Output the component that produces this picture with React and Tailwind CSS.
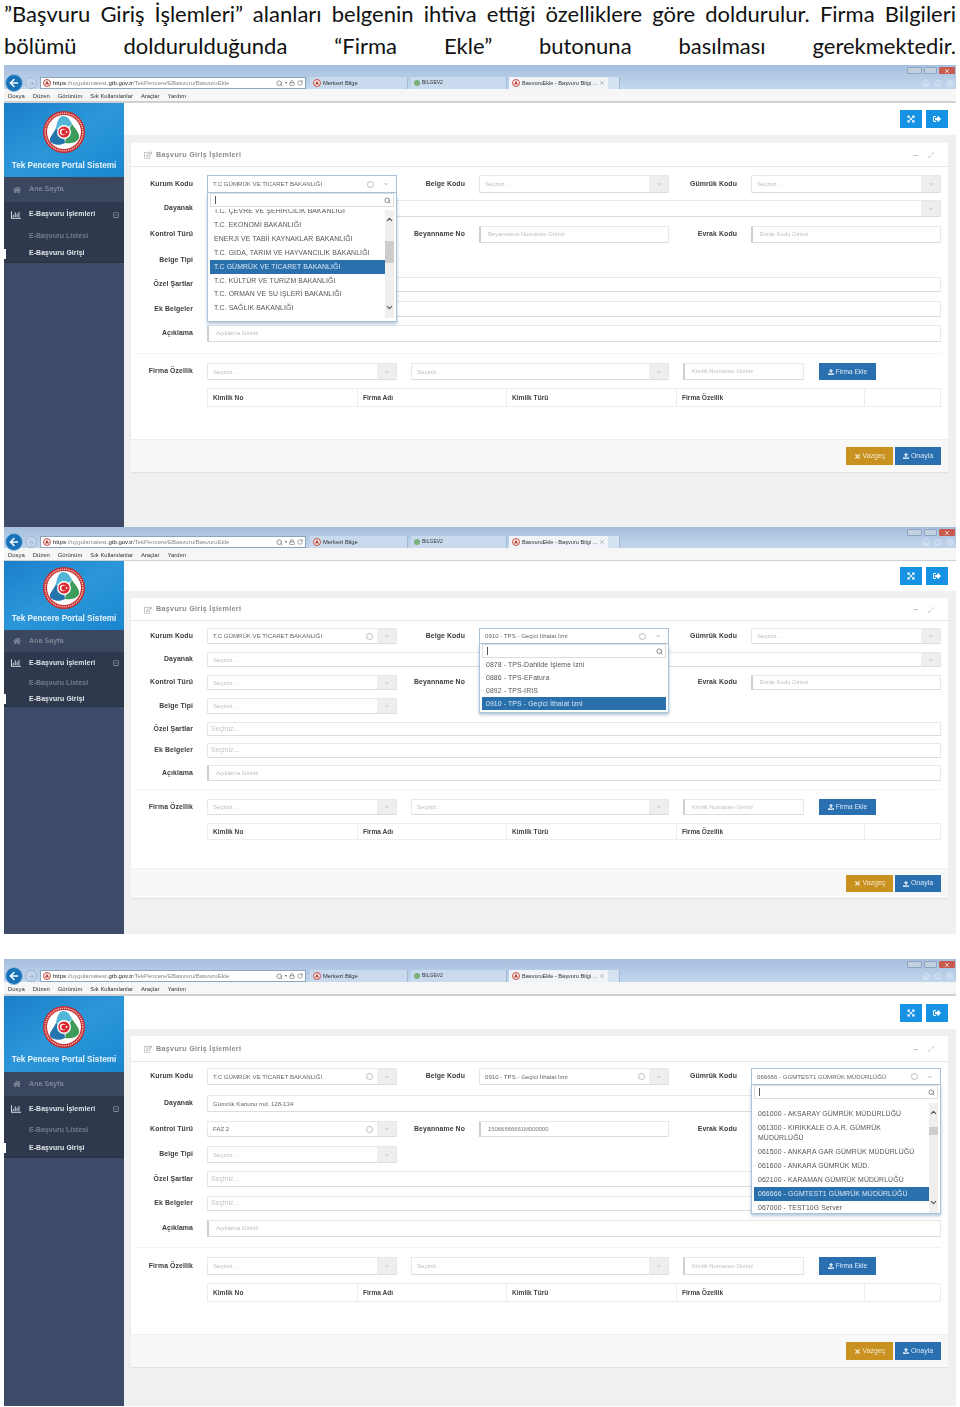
import { ArrowLeft, ArrowRight, ChevronDown, ChevronUp, Lock, RotateCw, Search, Home, Star, Settings, X } from 'lucide-react';
import { FaHome, FaRegChartBar, FaRegEdit, FaRegMinusSquare, FaExpandArrowsAlt, FaSignOutAlt, FaTimes, FaUpload, FaMinus, FaExpandAlt } from 'react-icons/fa';

const FONT = "font-['Liberation_Sans',Arial,sans-serif]";

const MENU = ['Dosya', 'Düzen', 'Görünüm', 'Sık Kullanılanlar', 'Araçlar', 'Yardım'];
const COLS = [
    { name: 'Kimlik No', cls: 'w-[150px]' },
    { name: 'Firma Adı', cls: 'w-[149px]' },
    { name: 'Kimlik Türü', cls: 'w-[170px]' },
    { name: 'Firma Özellik', cls: 'w-[188px]' },
    { name: '', cls: 'flex-1' },
];

const KURUM_ITEMS = [
    'T.C. EKONOMİ BAKANLIĞI',
    'ENERJİ VE TABİİ KAYNAKLAR BAKANLIĞI',
    'T.C. GIDA, TARIM VE HAYVANCILIK BAKANLIĞI',
    'T.C GÜMRÜK VE TİCARET BAKANLIĞI',
    'T.C. KÜLTÜR VE TURİZM BAKANLIĞI',
    'T.C. ORMAN VE SU İŞLERİ BAKANLIĞI',
    'T.C. SAĞLIK BAKANLIĞI',
];
const BELGE_ITEMS = ['0878 - TPS-Dahilde İşleme İzni', '0886 - TPS-EFatura', '0892 - TPS-IRIS', '0910 - TPS - Geçici İthalat İzni'];
const GUMRUK_ITEMS = [
    '061000 - AKSARAY GÜMRÜK MÜDÜRLÜĞÜ',
    '061300 - KIRIKKALE O.A.R. GÜMRÜK MÜDÜRLÜĞÜ',
    '061500 - ANKARA GAR GÜMRÜK MÜDÜRLÜĞÜ',
    '061600 - ANKARA GÜMRÜK MÜD.',
    '062100 - KARAMAN GÜMRÜK MÜDÜRLÜĞÜ',
    '066666 - GGMTEST1 GÜMRÜK MÜDÜRLÜĞÜ',
    '067000 - TEST10G Server',
];

const Favicon = () => (
    <svg viewBox="0 0 10 10" className="w-[8px] h-[8px] shrink-0">
        <circle cx="5" cy="5" r="4.3" fill="#fff" stroke="#c0392b" strokeWidth="1.2" />
        <path d="M5 2 L7.6 7 H2.4 Z" fill="#b4483f" />
    </svg>
);

const Logo = () => (
    <svg viewBox="0 0 42 42" className="w-[42px] h-[42px]">
        <circle cx="21" cy="21" r="21" fill="#c62f32" />
        <circle cx="21" cy="21" r="18.8" fill="none" stroke="#f3c9c4" strokeWidth="1.4" strokeDasharray="1.2 1" />
        <circle cx="21" cy="21" r="17" fill="#fff" />
        <path d="M20 5 C25 5 27 9 29 13 L21 21 L13 17 C14 11 16 5 20 5 Z" fill="#53b6d6" />
        <path d="M29 13 C32 18 37 22 36 27 C34 32 26 33 22 32 L24 22 Z" fill="#3d9a58" />
        <path d="M13 17 L21 24 L22 32 C17 35 9 34 7 30 C6 26 11 22 13 17 Z" fill="#2474ad" />
        <circle cx="21" cy="21" r="7" fill="#fff" />
        <circle cx="21" cy="21" r="5.6" fill="#d8262c" />
        <circle cx="20" cy="21" r="3.2" fill="#fff" />
        <circle cx="21" cy="21" r="2.6" fill="#d8262c" />
        <circle cx="23.6" cy="21" r="0.9" fill="#fff" />
    </svg>
);

const Chrome = ({ cfg }) => (
    <div className={`${cfg.chrome} flex flex-col bg-gradient-to-b from-[#a6bfdf] via-[#bdd2ea] to-[#cfdff1] overflow-visible`}>
        <div className="h-[13px] flex items-start justify-end pt-[2px] pr-[1px] gap-[2px]">
            <div className="w-[15px] h-[7px] border border-[#8ea5bf] bg-[#c2d0e0] rounded-[1px]" />
            <div className="w-[13px] h-[7px] border border-[#8ea5bf] bg-[#c2d0e0] rounded-[1px]" />
            <div className="w-[16px] h-[7px] bg-[#c95a50] rounded-[1px] flex items-center justify-center">
                <X size={6} strokeWidth={3} className="text-white" />
            </div>
        </div>
        <div className="h-[12px] flex items-center">
            <div className="ml-[1px] w-[18px] h-[18px] -my-[3px] z-10 rounded-full bg-[#1872b8] border border-[#8fbbdf] flex items-center justify-center">
                <ArrowLeft size={12} strokeWidth={3} className="text-white" />
            </div>
            <div className="ml-[2px] w-[12px] h-[12px] rounded-full bg-[#c6d6ea] border border-[#9fb7d3] flex items-center justify-center">
                <ArrowRight size={7} className="text-[#8fa8c6]" />
            </div>
            <div className="ml-[3px] w-[266px] h-[12px] bg-white border border-[#8ea5bf] flex items-center pl-[2px] pr-[2px] gap-[2px]">
                <Favicon />
                <span className="text-[6px] text-[#888] whitespace-nowrap">
                    <span className="text-[#222]">https</span>://uygulamatest.<span className="text-[#222]">gtb.gov.tr</span>/TekPencere/EBasvuru/BasvuruEkle
                </span>
                <div className="ml-auto flex items-center gap-[2px] text-[#555]">
                    <Search size={7} />
                    <span className="text-[4px]">▾</span>
                    <Lock size={6} />
                    <RotateCw size={6} />
                </div>
            </div>
            <div className="ml-[4px] w-[98px] h-[12px] bg-[#c9daee] border-r border-[#a4bad6] flex items-center pl-[3px] gap-[2px]">
                <Favicon />
                <span className="text-[5.8px] text-[#333]">Merkezi Bilge</span>
            </div>
            <div className="ml-[3px] w-[96px] h-[12px] bg-[#c9daee] border-r border-[#a4bad6] flex items-center pl-[3px] gap-[2px]">
                <div className="w-[6px] h-[6px] rounded-full bg-[#7bb079]" />
                <span className="text-[5px] text-[#333]">BILGEV2</span>
            </div>
            <div className="ml-[2px] w-[99px] h-[12px] bg-[#f0f4f9] flex items-center pl-[3px] gap-[2px]">
                <Favicon />
                <span className="text-[5.6px] text-[#333] whitespace-nowrap">BasvuruEkle - Başvuru Bilgi ...</span>
                <X size={6} className="ml-auto mr-[3px] text-[#777]" />
            </div>
            <div className="w-[12px] h-[12px] bg-[#d5e2f2] border-r border-[#a4bad6]" />
            <div className="ml-auto mr-[2px] flex items-center gap-[4px] text-[#e8eff7]">
                <Home size={8} />
                <Star size={8} />
                <Settings size={8} />
            </div>
        </div>
        <div className="flex-1 bg-[#f6f6f6] border-b-2 border-[#d0d0d0] flex items-center pt-[3px] pl-[4px] gap-[8px] text-[5.9px] text-[#333]">
            {MENU.map(item => <span key={item}>{item}</span>)}
        </div>
    </div>
);

const Sidebar = ({ cfg }) => (
    <div className="w-[120px] shrink-0 bg-[#3e4b68] flex flex-col">
        <div className={`${cfg.brand} bg-gradient-to-br from-[#1a7fca] via-[#2b97d9] to-[#1a86cf] flex flex-col items-center`}>
            <Logo />
            <span className="mt-auto text-[8.2px] font-bold text-[#e9f3fa] whitespace-nowrap">Tek Pencere Portal Sistemi</span>
        </div>
        <div className={`${cfg.ana} bg-[#3b465f] flex items-center pl-[9px] gap-[8px] text-[#7f8795]`}>
            <FaHome size={8} />
            <span className="text-[7px] font-bold tracking-[0.1px]">Ana Sayfa</span>
        </div>
        <div className="bg-[#2e394e] flex flex-col border-b border-[#26303f]">
            <div className={`${cfg.groupTitle} flex items-center pl-[7px] pr-[5px] text-[#dfe3e8]`}>
                <FaRegChartBar size={10} />
                <span className="ml-[8px] text-[6.9px] font-bold tracking-[0.1px]">E-Başvuru İşlemleri</span>
                <FaRegMinusSquare size={6} className="ml-auto text-[#a0a7b2]" />
            </div>
            <div className={`${cfg.groupItem1} flex items-center pl-[25px] text-[7px] font-bold text-[#737c8b]`}>E-Başvuru Listesi</div>
            <div className={`${cfg.groupItem2} flex items-center text-[6.9px] font-bold text-[#e4e7eb] tracking-[0.1px]`}>
                <div className="w-[2px] h-[10px] bg-white mr-[23px]" />
                E-Başvuru Girişi
            </div>
        </div>
    </div>
);

const Label = ({ text, className }) => (
    <div className={`${className} shrink-0 mr-[14px] text-right text-[6.9px] font-bold text-[#3b3b3b] tracking-[0.1px] whitespace-nowrap`}>{text}</div>
);

const ClearDot = () => <div className="w-[7px] h-[7px] rounded-full border border-[#bcbcbc] shrink-0" />;

const Select = ({ value, placeholder = 'Seçiniz...', clear, arrow = true, className = 'w-[190px]' }) => (
    <div className={`${className} h-full flex bg-white border border-[#e8e8e8] border-b-[#dcdcdc]`}>
        <div className={`flex-1 pl-[5px] pr-[4px] flex items-center text-[6.1px] whitespace-nowrap overflow-hidden ${value ? 'text-[#666]' : 'text-[#bdbdbd]'}`}>
            {value || placeholder}
            {clear && <div className="ml-auto"><ClearDot /></div>}
        </div>
        {arrow && (
            <div className="w-[19px] bg-[#eeeeee] flex items-center justify-center">
                <ChevronDown size={6} className="text-[#999]" />
            </div>
        )}
    </div>
);

const Input = ({ placeholder, value, className = 'w-[190px]' }) => (
    <div className={`${className} h-full bg-white border border-[#e8e8e8] border-b-[#dcdcdc] border-l-2 border-l-[#cfcfcf] pl-[7px] flex items-center text-[5.9px] whitespace-nowrap ${value ? 'text-[#777]' : 'text-[#c0c0c0]'}`}>
        {value || placeholder}
    </div>
);

const Multi = () => (
    <div className="flex-1 h-full bg-white border border-[#e8e8e8] border-b-[#dcdcdc] pl-[3px] flex items-center text-[7px] text-[#c4c4c4]">Seçiniz...</div>
);

const ScrollTrack = ({ thumb, track }) => (
    <div className={`${track} w-[9px] bg-[#efefef] flex flex-col items-center justify-between`}>
        <ChevronUp size={9} strokeWidth={3} className="text-[#555] mt-[5px] shrink-0" />
        <div className={`${thumb} w-[9px] bg-[#cdcdcd]`} />
        <ChevronDown size={9} strokeWidth={3} className="text-[#555] mb-[6px] shrink-0" />
    </div>
);

// açık select2 kutusu: başlık + arama + liste
const OpenSelect = ({ value, children, panel }) => (
    <div className="relative w-[190px] h-full z-20">
        <div className="h-full bg-white border border-[#a9c3da] flex items-center pl-[5px] pr-[7px] text-[6.1px] text-[#666] whitespace-nowrap">
            {value}
            <div className="ml-auto flex items-center gap-[9px]">
                <ClearDot />
                <ChevronDown size={6} className="text-[#777]" />
            </div>
        </div>
        <div className={`${panel} absolute left-0 top-full w-[190px] bg-white border border-[#a9c3da] border-t-0 shadow-[0_2px_3px_rgba(90,130,170,0.45)] px-[2px]`}>
            <div className="h-[14px] border border-[#dcdcdc] flex items-center pl-[4px] pr-[2px]">
                <div className="w-px h-[8px] bg-[#555]" />
                <Search size={7} strokeWidth={2.5} className="ml-auto text-[#666]" />
            </div>
            {children}
        </div>
    </div>
);

const Option = ({ text, active, cls }) => (
    <div className={`${cls} pl-[4px] flex items-center text-[6.9px] tracking-[0.1px] leading-[10px] ${active ? 'bg-[#2a70ac] text-[#dbe8f3]' : 'text-[#555]'}`}>{text}</div>
);

const KurumList = () => (
    <div className="flex h-[111px] mt-[2px] overflow-hidden">
        <div className="flex-1 overflow-hidden">
            <div className="h-[12px] -mt-[3px] pl-[4px] text-[6.9px] leading-[10px] tracking-[0.1px] text-[#555]">T.C. ÇEVRE VE ŞEHİRCİLİK BAKANLIĞI</div>
            {KURUM_ITEMS.map(item => <Option key={item} text={item} active={item.startsWith('T.C GÜMRÜK')} cls="h-[13.9px]" />)}
        </div>
        <ScrollTrack track="h-[108px] mt-[1px]" thumb="h-[22px] -mt-[24px]" />
    </div>
);

const BelgeList = () => (
    <div className="pb-[2px]">
        {BELGE_ITEMS.map(item => <Option key={item} text={item} active={item.startsWith('0910')} cls="h-[13px]" />)}
    </div>
);

const GumrukList = () => (
    <div className="flex h-[114px] pt-[4px]">
        <div className="flex-1 pt-[4px]">
            {GUMRUK_ITEMS.map(item => (
                <Option
                    key={item}
                    text={item}
                    active={item.startsWith('066666')}
                    cls={item.startsWith('061300') ? 'h-[23.5px] pr-[30px]' : 'h-[14px]'}
                />
            ))}
        </div>
        <ScrollTrack track="h-[110px]" thumb="h-[8px] -mt-[54px]" />
    </div>
);

const Panel = ({ cfg }) => {
    const { rows, data } = cfg;
    return (
        <div className="flex-1 bg-[#f0f0f0] flex flex-col">
            <div className={`${cfg.topbar} bg-white flex items-center justify-end pr-[8px] gap-[4px]`}>
                <div className="w-[22px] h-[18px] bg-[#1792e3] flex items-center justify-center text-white"><FaExpandArrowsAlt size={8} /></div>
                <div className="w-[22px] h-[18px] bg-[#1792e3] flex items-center justify-center text-white"><FaSignOutAlt size={8} /></div>
            </div>
            <div className={`${cfg.panelTop} ml-[7px] mr-[8px] bg-white flex flex-col shadow-[0_1px_1px_rgba(0,0,0,0.06)]`}>
                <div className={`${cfg.head} border-b border-[#e6e6e6] flex items-center pt-[1px] pl-[13px] pr-[14px] text-[#8b8b8b]`}>
                    <FaRegEdit size={8} className="text-[#aaa]" />
                    <span className="ml-[4px] text-[7.2px] font-bold tracking-[0.3px]">Başvuru Giriş İşlemleri</span>
                    <FaMinus size={5} className="ml-auto text-[#c4c4c4]" />
                    <FaExpandAlt size={6} className="ml-[10px] text-[#cfcfcf]" />
                </div>

                <div className="flex flex-col pr-[7px]">
                    <div className={`${rows[0]} flex items-center`}>
                        <Label text="Kurum Kodu" className="w-[62px]" />
                        {data.open === 'kurum'
                            ? <OpenSelect value="T.C GÜMRÜK VE TİCARET BAKANLIĞI" panel="h-[129px]"><KurumList /></OpenSelect>
                            : <Select value="T.C GÜMRÜK VE TİCARET BAKANLIĞI" clear />}
                        <Label text="Belge Kodu" className="w-[68px]" />
                        {data.open === 'belge'
                            ? <OpenSelect value="0910 - TPS - Geçici İthalat İzni" panel="h-[69px]"><BelgeList /></OpenSelect>
                            : <Select value={data.belge} clear={!!data.belge} />}
                        <Label text="Gümrük Kodu" className="w-[68px]" />
                        {data.open === 'gumruk'
                            ? <OpenSelect value="066666 - GGMTEST1 GÜMRÜK MÜDÜRLÜĞÜ" panel="h-[129px]"><GumrukList /></OpenSelect>
                            : <Select />}
                    </div>
                    <div className={`${rows[1]} flex items-center`}>
                        <Label text="Dayanak" className="w-[62px]" />
                        <Select value={data.dayanak} className="flex-1" />
                    </div>
                    <div className={`${rows[2]} flex items-center`}>
                        <Label text="Kontrol Türü" className="w-[62px]" />
                        <Select value={data.kontrol} clear={!!data.kontrol} />
                        <Label text="Beyanname No" className="w-[68px]" />
                        <Input placeholder="Beyanname Numarası Giriniz" value={data.beyanname} />
                        <Label text="Evrak Kodu" className="w-[68px]" />
                        <Input placeholder="Evrak Kodu Giriniz" />
                    </div>
                    <div className={`${rows[3]} flex items-center`}>
                        <Label text="Belge Tipi" className="w-[62px]" />
                        <Select />
                    </div>
                    <div className={`${rows[4]} flex items-center`}>
                        <Label text="Özel Şartlar" className="w-[62px]" />
                        <Multi />
                    </div>
                    <div className={`${rows[5]} flex items-center`}>
                        <Label text="Ek Belgeler" className="w-[62px]" />
                        <Multi />
                    </div>
                    <div className={`${rows[6]} flex items-center`}>
                        <Label text="Açıklama" className="w-[62px]" />
                        <Input placeholder="Açıklama Giriniz" className="flex-1" />
                    </div>
                    <div className={`${rows[7]} h-px ml-[7px] bg-[#f2f2f2]`} />
                    <div className={`${rows[8]} flex items-center`}>
                        <Label text="Firma Özellik" className="w-[62px]" />
                        <Select />
                        <Select className="ml-[14px] w-[258px]" />
                        <Input placeholder="Kimlik Numarası Giriniz" className="ml-[14px] w-[121px]" />
                        <div className="ml-[15px] w-[57px] h-full bg-[#2a6fb0] flex items-center justify-center gap-[2px] text-[#dbe8f5]">
                            <FaUpload size={6} />
                            <span className="text-[6.6px]">Firma Ekle</span>
                        </div>
                    </div>
                    <div className={`${rows[9]} ml-[76px] flex border border-[#ededed]`}>
                        {COLS.map((col, i) => (
                            <div key={i} className={`${col.cls} ${i < COLS.length - 1 ? 'border-r border-[#ededed]' : ''} pl-[5px] flex items-center text-[6.6px] font-bold text-[#444]`}>{col.name}</div>
                        ))}
                    </div>
                </div>

                <div className={`${cfg.foot} bg-[#f8f8f8] border-t border-[#efefef] flex items-center justify-end pr-[7px] gap-[2px]`}>
                    <div className={`${cfg.btn} w-[47px] bg-[#c9911f] flex items-center justify-center gap-[2px] text-[#f3e7cc]`}>
                        <FaTimes size={7} />
                        <span className="text-[7px]">Vazgeç</span>
                    </div>
                    <div className={`${cfg.btn} w-[46px] bg-[#2a6fb0] flex items-center justify-center gap-[2px] text-[#dbe8f5]`}>
                        <FaUpload size={6} />
                        <span className="text-[7px]">Onayla</span>
                    </div>
                </div>
            </div>
        </div>
    );
};

const Shot = ({ cfg }) => (
    <div className={`${cfg.height} mx-[4px] w-[952px] flex flex-col blur-[0.35px]`}>
        <Chrome cfg={cfg} />
        <div className="flex-1 flex">
            <Sidebar cfg={cfg} />
            <Panel cfg={cfg} />
        </div>
    </div>
);

const SHOT_1 = {
    height: 'h-[462px]', chrome: 'h-[38px]', brand: 'h-[74px] pt-[8px] pb-[5px]', ana: 'h-[25px]',
    groupTitle: 'h-[25px]', groupItem1: 'h-[18px]', groupItem2: 'h-[17px]',
    topbar: 'h-[32px]', panelTop: 'mt-[8px]', head: 'h-[24px]', foot: 'mt-[32px] h-[33px]', btn: 'h-[18px]',
    rows: ['mt-[8px] h-[18px]', 'mt-[7px] h-[17px]', 'mt-[9px] h-[17px]', 'mt-[8px] h-[18px]', 'mt-[8px] h-[15px]', 'mt-[9px] h-[16px]', 'mt-[8px] h-[17px]', 'mt-[11px]', 'mt-[9px] h-[17px]', 'mt-[8px] h-[19px]'],
    data: { open: 'kurum' },
};

const SHOT_2 = {
    height: 'h-[407px]', chrome: 'h-[34px]', brand: 'h-[69px] pt-[6px] pb-[5px]', ana: 'h-[22px]',
    groupTitle: 'h-[22px]', groupItem1: 'h-[18px]', groupItem2: 'h-[14px]',
    topbar: 'h-[30px]', panelTop: 'mt-[7px]', head: 'h-[23px]', foot: 'mt-[28px] h-[30px]', btn: 'h-[17px]',
    rows: ['mt-[7px] h-[16px]', 'mt-[8px] h-[15px]', 'mt-[8px] h-[15px]', 'mt-[8px] h-[16px]', 'mt-[8px] h-[14px]', 'mt-[7px] h-[15px]', 'mt-[7px] h-[16px]', 'mt-[8px]', 'mt-[9px] h-[16px]', 'mt-[8px] h-[17px]'],
    data: { open: 'belge' },
};

const SHOT_3 = {
    height: 'h-[447px]', chrome: 'h-[37px]', brand: 'h-[76px] pt-[10px] pb-[6px]', ana: 'h-[24px]',
    groupTitle: 'h-[26px]', groupItem1: 'h-[17px]', groupItem2: 'h-[18px]',
    topbar: 'h-[33px]', panelTop: 'mt-[7px]', head: 'h-[26px]', foot: 'mt-[32px] h-[33px]', btn: 'h-[18px]',
    rows: ['mt-[6px] h-[17px]', 'mt-[10px] h-[17px]', 'mt-[9px] h-[16px]', 'mt-[9px] h-[17px]', 'mt-[8px] h-[16px]', 'mt-[9px] h-[15px]', 'mt-[9px] h-[17px]', 'mt-[10px]', 'mt-[9px] h-[18px]', 'mt-[8px] h-[19px]'],
    data: { open: 'gumruk', belge: '0910 - TPS - Geçici İthalat İzni', dayanak: 'Gümrük Kanunu md. 128-134', kontrol: 'FAZ 2', beyanname: '15066666661M000000' },
};

export default function App() {
    return (
        <div className={`${FONT} w-[960px] h-[1407px] bg-white overflow-hidden`}>
            <div className="h-[65px] px-[4px] -mt-[2px] mb-[2px] font-['Lato','Open_Sans',sans-serif] text-[22px] leading-[32px] text-[#111]">
                <p className="[text-align:justify] [text-align-last:justify]">”Başvuru Giriş İşlemleri” alanları belgenin ihtiva ettiği özelliklere göre doldurulur. Firma Bilgileri</p>
                <p className="[text-align:justify] [text-align-last:justify]">bölümü doldurulduğunda “Firma Ekle” butonuna basılması gerekmektedir.</p>
            </div>
            <Shot cfg={SHOT_1} />
            <Shot cfg={SHOT_2} />
            <div className="h-[25px]" />
            <Shot cfg={SHOT_3} />
        </div>
    );
}
